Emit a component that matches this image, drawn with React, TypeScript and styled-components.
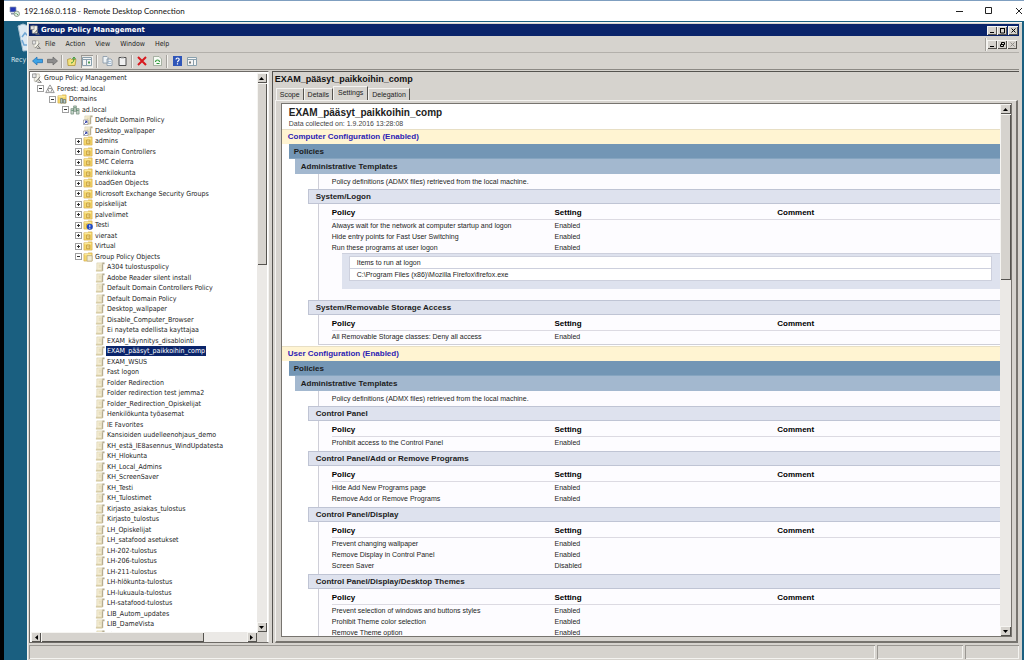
import React from "react";
import styled, { createGlobalStyle, css } from "styled-components";

const face = "#d6d3ce";
const navy = "#0a246a";
const sans = `"Liberation Sans", Arial, sans-serif`;
const ui = `"DejaVu Sans Condensed", "DejaVu Sans", Tahoma, sans-serif`;

const Global = createGlobalStyle`
  *, *::before, *::after { box-sizing: border-box; }
  body { margin: 0; background: #000; font-family: ${ui}; font-size: 7px; color: #1c1c1c; overflow: hidden; }
  button { font: inherit; color: inherit; margin: 0; padding: 0; border: 0; background: none; }
  h1, h2, h3, h4, p, ul { margin: 0; padding: 0; font-size: inherit; }
  svg { display: block; flex: none; }
`;

const raised = css`
  background: ${face};
  box-shadow: inset 1px 1px 0 #f6f5f2, inset -1px -1px 0 #55534f;
`;
const sunken = css`
  box-shadow: inset 1px 1px 0 #9a9792, inset -1px -1px 0 #f4f3f0;
`;

const Screen = styled.div`
  height: 100vh;
  display: flex;
  flex-direction: column;
  padding-left: 4px;
  background: #000;
`;
const RemoteBar = styled.header`
  height: 21px;
  flex: none;
  display: flex;
  align-items: center;
  gap: 4px;
  padding-left: 5px;
  background: #fff;
  border-top: 1px solid #7f9fc0;
  font: 8px Lato, "Segoe UI", sans-serif;
  color: #111;
`;
const RemoteTitle = styled.h1`
  flex: 1;
  font-weight: 400;
  white-space: nowrap;
`;
const RemoteButtons = styled.div`
  display: flex;
  gap: 20px;
`;
const RemoteButton = styled.button`
  width: 10px;
  height: 12px;
  display: grid;
  place-items: center;
`;
const Desktop = styled.main`
  flex: 1;
  min-height: 0;
  display: grid;
  grid-template-columns: 23px minmax(0, 1fr) 2px;
  grid-template-rows: minmax(0, 1fr);
  background: #1a5f80;
  padding-top: 1px;
`;
const DesktopIcons = styled.aside`
  overflow: hidden;
  padding: 1px 0 0 7px;
  color: #dfe9ee;
  font: 7px ${ui};
  white-space: nowrap;
`;
const BinIcon = styled.div`
  padding-left: 6px;
  margin-bottom: 4px;
`;
const Window = styled.section`
  min-width: 0;
  min-height: 0;
  display: flex;
  flex-direction: column;
  padding: 1px 3px 1px 1px;
  background: ${face};
  border-top: 1px solid #f4f3f0;
  border-left: 1px solid #f4f3f0;
`;
const TitleBar = styled.div`
  height: 12px;
  flex: none;
  display: flex;
  align-items: center;
  gap: 1px;
  padding: 0 1px;
  background: ${navy};
  color: #fff;
  font: bold 7px "DejaVu Sans", Tahoma, sans-serif;
`;
const TitleText = styled.h2`
  flex: 1;
  white-space: nowrap;
`;
const Buttons = styled.div`
  display: flex;
  align-items: center;
`;
const FrameButton = styled.button`
  ${raised}
  width: 10px;
  height: 9px;
  display: grid;
  place-items: center;
`;
const MenuBar = styled.nav`
  height: 17px;
  flex: none;
  display: flex;
  align-items: center;
  padding: 0 2px 0 3px;
  border-bottom: 1px solid #b3b0ab;
`;
const MenuList = styled.div`
  flex: 1;
  display: flex;
  gap: 10px;
  padding-left: 4px;
`;
const ToolBar = styled.div`
  height: 17px;
  flex: none;
  display: flex;
  align-items: center;
  gap: 3px;
  padding-left: 2px;
  border-bottom: 1px solid #8c8984;
`;
const ToolButton = styled.button<{ $pressed?: boolean }>`
  width: 12px;
  height: 13px;
  display: grid;
  place-items: center;
  ${(p) => p.$pressed && css`background: #e8e6e2; ${sunken}`}
`;
const Separator = styled.i`
  width: 2px;
  height: 13px;
  border-left: 1px solid #a5a29d;
  border-right: 1px solid #f4f3f0;
`;
const Body = styled.div`
  flex: 1;
  min-height: 0;
  display: grid;
  grid-template-columns: minmax(0, 240fr) minmax(0, 748fr);
  grid-template-rows: minmax(0, 1fr);
  gap: 3px;
  padding-top: 1px;
`;
const TreePane = styled.div`
  min-height: 0;
  display: grid;
  grid-template: minmax(0, 1fr) 10px / minmax(0, 1fr) 10px;
  padding: 1px 1px 0;
  border: 1px solid #6d6a66;
  border-right-color: #f4f3f0;
  background: #fff;
`;
const Tree = styled.ul`
  list-style: none;
  overflow: hidden;
  display: grid;
  grid-auto-rows: 10px 11px;
  align-content: start;
  padding-left: 1px;
`;
const indents = [0, 13, 25, 38, 51, 63];
const TreeItem = styled.li<{ $depth: number; $box: boolean }>`
  display: flex;
  align-items: center;
  gap: 2px;
  white-space: nowrap;
  padding-left: ${(p) => indents[p.$depth] - (p.$box ? 8 : 0)}px;
`;
const Expander = styled.button`
  width: 7px;
  height: 7px;
  border: 1px solid #a0a0a0;
  display: grid;
  place-items: center;
  margin-right: -1px;
`;
const TreeLabel = styled.span<{ $selected?: boolean }>`
  line-height: 10px;
  ${(p) => p.$selected && css`background: ${navy}; color: #fff; box-shadow: -1px 0 0 ${navy}, 1px 0 0 ${navy};`}
`;
const ScrollBar = styled.div<{ $horizontal?: boolean }>`
  display: flex;
  flex-direction: ${(p) => (p.$horizontal ? "row" : "column")};
  background: #ebe9e6;
`;
const ScrollButton = styled.button`
  ${raised}
  flex: 0 0 10px;
  display: grid;
  place-items: center;
`;
const Thumb = styled.div<{ $grow: number }>`
  ${raised}
  flex: ${(p) => p.$grow} 0 0;
`;
const Track = styled.div<{ $grow: number }>`
  flex: ${(p) => p.$grow} 0 0;
`;
const Corner = styled.div`
  background: ${face};
`;
const DetailPane = styled.div`
  min-width: 0;
  min-height: 0;
  display: flex;
  flex-direction: column;
  padding: 2px 1px 0 2px;
  border-top: 1px solid #55534f;
  border-left: 1px solid #55534f;
`;
const PaneTitle = styled.h3`
  font: bold 9px/11px ${sans};
  color: #111;
`;
const TabList = styled.div`
  display: flex;
  align-items: flex-end;
  height: 15px;
  flex: none;
  padding-left: 1px;
`;
const Tab = styled.button<{ $active?: boolean }>`
  height: ${(p) => (p.$active ? 14 : 12)}px;
  padding: ${(p) => (p.$active ? "0 4px 2px" : "0 3px")};
  font: 7px ${sans};
  border-top: 1px solid #f4f3f0;
  border-left: 1px solid #f4f3f0;
  border-right: 1px solid #55534f;
`;
const TabPage = styled.div`
  flex: 1;
  min-height: 0;
  padding: 2px 4px 4px 5px;
  border: 1px solid #f4f3f0;
  border-right: 2px solid #77746f;
  border-bottom: 2px solid #77746f;
`;
const Report = styled.div`
  height: 100%;
  display: grid;
  grid-template-columns: minmax(0, 1fr) 11px;
  grid-template-rows: minmax(0, 1fr);
  border: 1px solid #77746f;
  background: #fff;
`;
const ReportBody = styled.article`
  overflow: hidden;
  font: 7px ${sans};
`;
const ReportTitle = styled.h3`
  padding: 3px 0 0 7px;
  font: bold 10px/12px ${sans};
  color: #222;
`;
const ReportDate = styled.p`
  padding-left: 7px;
  line-height: 10px;
  color: #444;
`;
const Band = styled.h4<{ $level: "config" | "policies" | "templates" | "section" }>`
  height: 15px;
  font-size: 8px;
  line-height: 13px;
  font-weight: 700;
  border-top: 1px solid transparent;
  border-bottom: 1px solid transparent;
  ${(p) =>
    ({
      config: css`padding-left: 6px; background: #fff4d2; color: #2c22b4; border-top-color: #e8dfc4;`,
      policies: css`margin-left: 7px; padding-left: 5px; background: #7396b5; border-bottom-color: #86a5c0;`,
      templates: css`margin-left: 13px; padding-left: 6px; background: #a3b8cf;`,
      section: css`margin-left: 26px; padding-left: 7px; background: #dee2ee; border-color: #bfc4d4; border-right: 0; border-left: 1px solid #bfc4d4;`,
    })[p.$level]}
`;
const Note = styled.p`
  height: 15px;
  margin-left: 36px;
  padding-left: 13px;
  line-height: 15px;
  background: #fdfcff;
  border-left: 1px solid #cfcfd8;
`;
const Content = styled.div<{ $last?: boolean }>`
  margin-left: 36px;
  padding: 2px 0 3px 13px;
  background: #fdfcff;
  border-left: 1px solid #cfcfd8;
  ${(p) => p.$last && css`border-bottom: 1px solid #cfcfd8; padding-bottom: 2px; margin-bottom: 1px;`}
`;
const Table = styled.table`
  width: 100%;
  table-layout: fixed;
  border-collapse: separate;
  border-spacing: 0;
  th, td { padding: 0; text-align: left; line-height: 11px; height: 11px; white-space: nowrap; }
  th { height: 14px; font-size: 8px; line-height: 12px; vertical-align: bottom; border-bottom: 1px solid #dcdae2; color: #000; }
`;
const Nested = styled.div`
  margin: 0 0 8px 10px;
  height: 36px;
  padding: 2px 8px 0 7px;
  background: #dee2ee;
  border-top: 1px solid #cdd0dd;
`;
const NestedTable = styled.table`
  width: 100%;
  border-collapse: collapse;
  background: #fff;
  td { height: 12px; line-height: 11px; padding: 0 0 0 7px; border: 1px solid #cdd0dd; }
`;
const StatusBar = styled.footer`
  height: 15px;
  flex: none;
  margin-top: 1px;
  display: grid;
  grid-template-columns: 848fr 86fr 54fr;
  gap: 2px;
  padding-top: 1px;
`;
const StatusCell = styled.div`
  ${sunken}
`;

type Kind = "console" | "forest" | "domains" | "domain" | "link" | "ou" | "ouBlocked" | "folder" | "gpo";

const Scroll = () => (
  <g>
    <path d="M2 1h6v8.500H2z" fill="#f4edd3" stroke="#d2c8a6" strokeWidth=".6" />
    <path d="M8 .5h2.500v2H8z" fill="#b5ac90" />
    <path d="M7.500 2.500h1.500v7.500H7.500z" fill="#b5ac90" />
    <path d="M1 8.500h7V10.500H1z" fill="#d8cda6" />
    <path d="M4 3.500h2.500M4 5.500h2.500" stroke="#d9cda4" strokeWidth=".8" />
  </g>
);
const Folder = () => (
  <g>
    <path d="M1 2h4l1-1h4v9H1z" fill="#f5d76a" stroke="#d3ab4c" strokeWidth=".7" />
    <path d="M1.500 3H9" stroke="#fff2b0" />
  </g>
);
const Servers = () => (
  <g>
    <path d="M1 4h3v6H1zM7 4h3v6H7zM4 1h3v6H4z" fill="#c3d3c8" stroke="#66806f" strokeWidth=".7" />
    <path d="M1.500 6h2M7.500 6h2M4.500 3h2" stroke="#3d7a55" strokeWidth=".7" />
  </g>
);
const Icon = ({ kind, size = 11 }: { kind: Kind; size?: number }) => (
  <svg width={size} height={size} viewBox="0 0 11 11" aria-hidden="true">
    {kind === "gpo" && <Scroll />}
    {kind === "console" && (
      <>
        <path d="M2.500 1h5.500v8H2.500z" fill="#f6f4ea" stroke="#a8a594" strokeWidth=".6" />
        <path d="M.5 1h4v4h-4z" fill="#e4e4e4" stroke="#777" strokeWidth=".7" />
        <path d="M4 10l5-6M6 10.300h4.500M7 7l3 3" fill="none" stroke="#6a6a6a" strokeWidth=".9" />
      </>
    )}
    {kind === "forest" && (
      <path d="M5.500 1L8 5H3zM3 5.500L5 9.500H.8zM8 5.500l2.200 4H6z" fill="#f4f4f4" stroke="#777" strokeWidth=".8" />
    )}
    {kind === "domains" && (
      <>
        <Folder />
        <path d="M4 5h2v5H4zM7 6h2.500v4H7z" fill="#b7ccd0" stroke="#52666a" strokeWidth=".7" />
      </>
    )}
    {kind === "domain" && <Servers />}
    {kind === "link" && (
      <>
        <Scroll />
        <path d="M.5 5.500h5v5h-5z" fill="#fff" stroke="#777" strokeWidth=".6" />
        <path d="M1.500 9.500L4 7M2.200 6.800h2v2" fill="none" stroke="#1b2ba0" />
      </>
    )}
    {(kind === "ou" || kind === "ouBlocked") && (
      <>
        <Folder />
        <path d="M4 4.500h3.500v4H4zM5 6.500h2" fill="#fbeaa0" stroke="#a97c1c" strokeWidth=".7" />
      </>
    )}
    {kind === "ouBlocked" && (
      <>
        <circle cx="7.500" cy="7.500" r="3.300" fill="#1f49c8" />
        <path d="M7.500 5.300v2.700M7.500 8.700v1" stroke="#fff" />
      </>
    )}
    {kind === "folder" && (
      <>
        <Folder />
        <path d="M4.500 4h5.500v6H4.500z" fill="#f3ecd0" stroke="#aa9f80" strokeWidth=".7" />
      </>
    )}
  </svg>
);

const Arrow = ({ dir }: { dir: "up" | "down" | "left" | "right" }) => (
  <svg width="5" height="5" viewBox="0 0 5 5" aria-hidden="true">
    <path
      fill="#000"
      d={{ up: "M0 4h5L2.500 1z", down: "M0 1h5L2.500 4z", left: "M4 0v5L1 2.500z", right: "M1 0v5l3-2.500z" }[dir]}
    />
  </svg>
);

const Glyph = ({ d, color = "#000", size = 7, width = 1 }: { d: string; color?: string; size?: number; width?: number }) => (
  <svg width={size} height={size} viewBox={`0 0 ${size} ${size}`} aria-hidden="true">
    <path d={d} fill="none" stroke={color} strokeWidth={width} />
  </svg>
);

type Node = { label: string; depth: number; kind: Kind; box?: "+" | "-"; selected?: boolean };
const ous = ["admins", "Domain Controllers", "EMC Celerra", "henkilokunta", "LoadGen Objects", "Microsoft Exchange Security Groups", "opiskelijat", "palvelimet", "Testi", "vieraat", "Virtual"];
const gpos = [
  "A304 tulostuspolicy", "Adobe Reader silent install", "Default Domain Controllers Policy", "Default Domain Policy",
  "Desktop_wallpaper", "Disable_Computer_Browser", "Ei nayteta edellista kayttajaa", "EXAM_käynnitys_disablointi",
  "EXAM_pääsyt_paikkoihin_comp", "EXAM_WSUS", "Fast logon", "Folder Redirection", "Folder redirection test jemma2",
  "Folder_Redirection_Opiskelijat", "Henkilökunta työasemat", "IE Favorites", "Kansioiden uudelleenohjaus_demo",
  "KH_estä_IE8asennus_WindUpdatesta", "KH_Hlokunta", "KH_Local_Admins", "KH_ScreenSaver", "KH_Testi", "KH_Tulostimet",
  "Kirjasto_asiakas_tulostus", "Kirjasto_tulostus", "LH_Opiskelijat", "LH_satafood asetukset", "LH-202-tulostus",
  "LH-206-tulostus", "LH-211-tulostus", "LH-hlökunta-tulostus", "LH-lukuaula-tulostus", "LH-satafood-tulostus",
  "LIB_Autom_updates", "LIB_DameVista", "LIB_DameVP",
];
const nodes: Node[] = [
  { label: "Group Policy Management", depth: 0, kind: "console" },
  { label: "Forest: ad.local", depth: 1, kind: "forest", box: "-" },
  { label: "Domains", depth: 2, kind: "domains", box: "-" },
  { label: "ad.local", depth: 3, kind: "domain", box: "-" },
  { label: "Default Domain Policy", depth: 4, kind: "link" },
  { label: "Desktop_wallpaper", depth: 4, kind: "link" },
  ...ous.map((label): Node => ({ label, depth: 4, kind: label === "Testi" ? "ouBlocked" : "ou", box: "+" })),
  { label: "Group Policy Objects", depth: 4, kind: "folder", box: "-" },
  ...gpos.map((label): Node => ({ label, depth: 5, kind: "gpo", selected: label === "EXAM_pääsyt_paikkoihin_comp" })),
];

type SectionData = { title: string; rows: [string, string][]; programs?: string[]; last?: boolean };
const computer: SectionData[] = [
  {
    title: "System/Logon",
    rows: [
      ["Always wait for the network at computer startup and logon", "Enabled"],
      ["Hide entry points for Fast User Switching", "Enabled"],
      ["Run these programs at user logon", "Enabled"],
    ],
    programs: ["Items to run at logon", "C:\\Program Files (x86)\\Mozilla Firefox\\firefox.exe"],
  },
  { title: "System/Removable Storage Access", rows: [["All Removable Storage classes: Deny all access", "Enabled"]], last: true },
];
const user: SectionData[] = [
  { title: "Control Panel", rows: [["Prohibit access to the Control Panel", "Enabled"]] },
  { title: "Control Panel/Add or Remove Programs", rows: [["Hide Add New Programs page", "Enabled"], ["Remove Add or Remove Programs", "Enabled"]] },
  { title: "Control Panel/Display", rows: [["Prevent changing wallpaper", "Enabled"], ["Remove Display in Control Panel", "Enabled"], ["Screen Saver", "Disabled"]] },
  { title: "Control Panel/Display/Desktop Themes", rows: [["Prevent selection of windows and buttons styles", "Enabled"], ["Prohibit Theme color selection", "Enabled"], ["Remove Theme option", "Enabled"]] },
];

const Section = ({ title, rows, programs, last }: SectionData) => (
  <section>
    <Band $level="section">{title}</Band>
    <Content $last={last}>
      <Table>
        <thead>
          <tr><th>Policy</th><th>Setting</th><th>Comment</th></tr>
        </thead>
        <tbody>
          {rows.map(([policy, setting]) => (
            <tr key={policy}><td>{policy}</td><td>{setting}</td><td /></tr>
          ))}
        </tbody>
      </Table>
      {programs && (
        <Nested>
          <NestedTable>
            <tbody>{programs.map((p) => <tr key={p}><td>{p}</td></tr>)}</tbody>
          </NestedTable>
        </Nested>
      )}
    </Content>
  </section>
);

const Configuration = ({ title, sections }: { title: string; sections: SectionData[] }) => (
  <section>
    <Band $level="config">{title}</Band>
    <Band $level="policies">Policies</Band>
    <Band $level="templates">Administrative Templates</Band>
    <Note>Policy definitions (ADMX files) retrieved from the local machine.</Note>
    {sections.map((s) => <Section key={s.title} {...s} />)}
  </section>
);

export default function App() {
  return (
    <Screen>
      <Global />
      <RemoteBar>
        <svg width="11" height="11" viewBox="0 0 11 11" aria-hidden="true">
          <path d="M1 1h6v5H1z" fill="#2438b8" stroke="#8d98ad" strokeWidth=".7" />
          <path d="M2 7h4v1.500H2z" fill="#8d98ad" />
          <circle cx="7.800" cy="7.800" r="2.700" fill="#dfeadf" stroke="#6d7d70" strokeWidth=".7" />
          <path d="M6.500 8l1-1M8 9l1-1" stroke="#2c8a3a" strokeWidth=".8" />
        </svg>
        <RemoteTitle>192.168.0.118 - Remote Desktop Connection</RemoteTitle>
        <RemoteButtons>
          <RemoteButton aria-label="Minimize"><Glyph size={8} d="M1 4.500h7" color="#222" /></RemoteButton>
          <RemoteButton aria-label="Maximize"><Glyph size={8} d="M.5 .5h6v6h-6z" color="#222" /></RemoteButton>
          <RemoteButton aria-label="Close"><Glyph size={8} d="M1 1l6 6M7 1l-6 6" color="#222" /></RemoteButton>
        </RemoteButtons>
      </RemoteBar>
      <Desktop>
        <DesktopIcons>
          <BinIcon>
            <svg width="22" height="29" viewBox="0 0 22 29" aria-hidden="true">
              <path d="M1 3l5-2 5 2 8-1-3 25-10 1z" fill="#dce9f2" stroke="#a9c2d2" />
              <path d="M5 14l3-4 3 3M5 17l2 5h4" fill="none" stroke="#6fa6d4" strokeWidth="1.500" />
            </svg>
          </BinIcon>
          Recy
        </DesktopIcons>
        <Window>
          <TitleBar>
            <Icon kind="console" size={10} />
            <TitleText>Group Policy Management</TitleText>
            <Buttons>
              <FrameButton aria-label="Minimize window"><Glyph d="M1 5.500h4" /></FrameButton>
              <FrameButton aria-label="Maximize window"><Glyph d="M1 1.500h5M1.500 1v5h4v-5" /></FrameButton>
            </Buttons>
            <Buttons>
              <FrameButton aria-label="Close window"><Glyph d="M1.500 1.500l4 4M5.500 1.500l-4 4" /></FrameButton>
            </Buttons>
          </TitleBar>
          <MenuBar>
            <Icon kind="console" size={9} />
            <MenuList>
              {["File", "Action", "View", "Window", "Help"].map((m) => <button key={m}>{m}</button>)}
            </MenuList>
            <Separator />
            <Buttons>
              <FrameButton aria-label="Minimize console"><Glyph d="M1 5.500h4" /></FrameButton>
              <FrameButton aria-label="Restore console"><Glyph d="M2.500 3V1.500h3v2h-1M1.500 3.500h3v2h-3z" /></FrameButton>
              <FrameButton aria-label="Close console" disabled><Glyph d="M1.500 1.500l4 4M5.500 1.500l-4 4" color="#8c8984" /></FrameButton>
            </Buttons>
          </MenuBar>
          <ToolBar>
            <ToolButton aria-label="Back">
              <svg width="11" height="10" viewBox="0 0 11 10"><path d="M.5 5L5 1v2.300h5.500v3.400H5V9z" fill="#3da3e6" stroke="#1c6cae" strokeWidth=".7" /></svg>
            </ToolButton>
            <ToolButton aria-label="Forward">
              <svg width="11" height="10" viewBox="0 0 11 10"><path d="M10.500 5L6 1v2.300H.5v3.400H6V9z" fill="#8d8d8d" stroke="#666" strokeWidth=".7" /></svg>
            </ToolButton>
            <Separator />
            <ToolButton aria-label="Up one level">
              <svg width="10" height="10" viewBox="0 0 10 10"><path d="M.5 3.500l3-1 1 1h4.500l-1 6h-7z" fill="#f3e27c" stroke="#a98d2c" strokeWidth=".7" /><path d="M4 7c2 0 3-2 3-5M5.500 3L7 1l1.500 2" fill="none" stroke="#3b9a34" /></svg>
            </ToolButton>
            <ToolButton aria-label="Show console tree" aria-pressed="true" $pressed>
              <svg width="10" height="9" viewBox="0 0 10 9"><path d="M.5.5h9v8h-9zM.5 2.500h9M4.500 3v5.500" fill="#f5f5f5" stroke="#8aa0ad" /><path d="M7 4v3M6 5.500h2" stroke="#4a9a50" /></svg>
            </ToolButton>
            <Separator />
            <ToolButton aria-label="Copy">
              <svg width="11" height="10" viewBox="0 0 11 10"><path d="M1 .5h4l1 1V7H1zM5 3h4l1 1v5.500H5z" fill="#eef3f6" stroke="#8496a6" strokeWidth=".8" /><path d="M6 5.500h3M6 7.500h3" stroke="#8aa8c8" strokeWidth=".7" /></svg>
            </ToolButton>
            <ToolButton aria-label="Paste">
              <svg width="9" height="10" viewBox="0 0 9 10"><path d="M1 1.500h7v8H1z" fill="#f0f0f0" stroke="#4e4e4e" /><path d="M3 .8h3v1.500H3z" fill="#888" /></svg>
            </ToolButton>
            <Separator />
            <ToolButton aria-label="Delete"><Glyph size={10} width={2} d="M1 1l8 8M9 1l-8 8" color="#d8191f" /></ToolButton>
            <ToolButton aria-label="Refresh">
              <svg width="9" height="10" viewBox="0 0 9 10"><path d="M.5.5h5.500l2.500 2.500v6.500h-8z" fill="#f6faf4" stroke="#8b9a88" strokeWidth=".7" /><path d="M2.500 6a2 2 0 1 1 4 0M6.500 7.500h-3" fill="none" stroke="#2f9a3b" strokeWidth="1.200" /></svg>
            </ToolButton>
            <Separator />
            <ToolButton aria-label="Help">
              <svg width="9" height="10" viewBox="0 0 9 10"><path d="M0 0h9v10H0z" fill="#2f55b8" /><path d="M3 3.500c0-2 3.200-2 3.200 0 0 1.200-1.700 1.200-1.700 2.700M4.500 7.200v1.300" fill="none" stroke="#fff" strokeWidth="1.200" /></svg>
            </ToolButton>
            <ToolButton aria-label="Show action pane">
              <svg width="10" height="9" viewBox="0 0 10 9"><path d="M.5.5h9v8h-9zM.5 2.500h9M6.500 3v5.500" fill="#f5f5f5" stroke="#8aa0ad" /><path d="M3 4v3M2 5.500h2" stroke="#777" /></svg>
            </ToolButton>
          </ToolBar>
          <Body>
            <TreePane>
              <Tree role="tree" aria-label="Console tree">
                {nodes.map((n, i) => (
                  <TreeItem key={i} role="treeitem" aria-selected={!!n.selected} $depth={n.depth} $box={!!n.box}>
                    {n.box && (
                      <Expander aria-label={`Toggle ${n.label}`}>
                        <Glyph size={5} d={n.box === "+" ? "M1 2.500h3M2.500 1v3" : "M1 2.500h3"} color="#333" />
                      </Expander>
                    )}
                    <Icon kind={n.kind} size={10} />
                    <TreeLabel $selected={n.selected}>{n.label}</TreeLabel>
                  </TreeItem>
                ))}
              </Tree>
              <ScrollBar>
                <ScrollButton aria-label="Scroll tree up"><Arrow dir="up" /></ScrollButton>
                <Thumb $grow={182} />
                <Track $grow={357} />
                <ScrollButton aria-label="Scroll tree down"><Arrow dir="down" /></ScrollButton>
              </ScrollBar>
              <ScrollBar $horizontal>
                <ScrollButton aria-label="Scroll tree left"><Arrow dir="left" /></ScrollButton>
                <Thumb $grow={165} />
                <Track $grow={43} />
                <ScrollButton aria-label="Scroll tree right"><Arrow dir="right" /></ScrollButton>
              </ScrollBar>
              <Corner />
            </TreePane>
            <DetailPane>
              <PaneTitle>EXAM_pääsyt_paikkoihin_comp</PaneTitle>
              <TabList role="tablist">
                {["Scope", "Details", "Settings", "Delegation"].map((t) => (
                  <Tab key={t} role="tab" aria-selected={t === "Settings"} $active={t === "Settings"}>{t}</Tab>
                ))}
              </TabList>
              <TabPage role="tabpanel">
                <Report>
                  <ReportBody>
                    <ReportTitle>EXAM_pääsyt_paikkoihin_comp</ReportTitle>
                    <ReportDate>Data collected on: 1.9.2016 13:28:08</ReportDate>
                    <Configuration title="Computer Configuration (Enabled)" sections={computer} />
                    <Configuration title="User Configuration (Enabled)" sections={user} />
                  </ReportBody>
                  <ScrollBar>
                    <ScrollButton aria-label="Scroll report up"><Arrow dir="up" /></ScrollButton>
                    <Thumb $grow={165} />
                    <Track $grow={344} />
                    <ScrollButton aria-label="Scroll report down"><Arrow dir="down" /></ScrollButton>
                  </ScrollBar>
                </Report>
              </TabPage>
            </DetailPane>
          </Body>
          <StatusBar>
            <StatusCell />
            <StatusCell />
            <StatusCell />
          </StatusBar>
        </Window>
      </Desktop>
    </Screen>
  );
}
